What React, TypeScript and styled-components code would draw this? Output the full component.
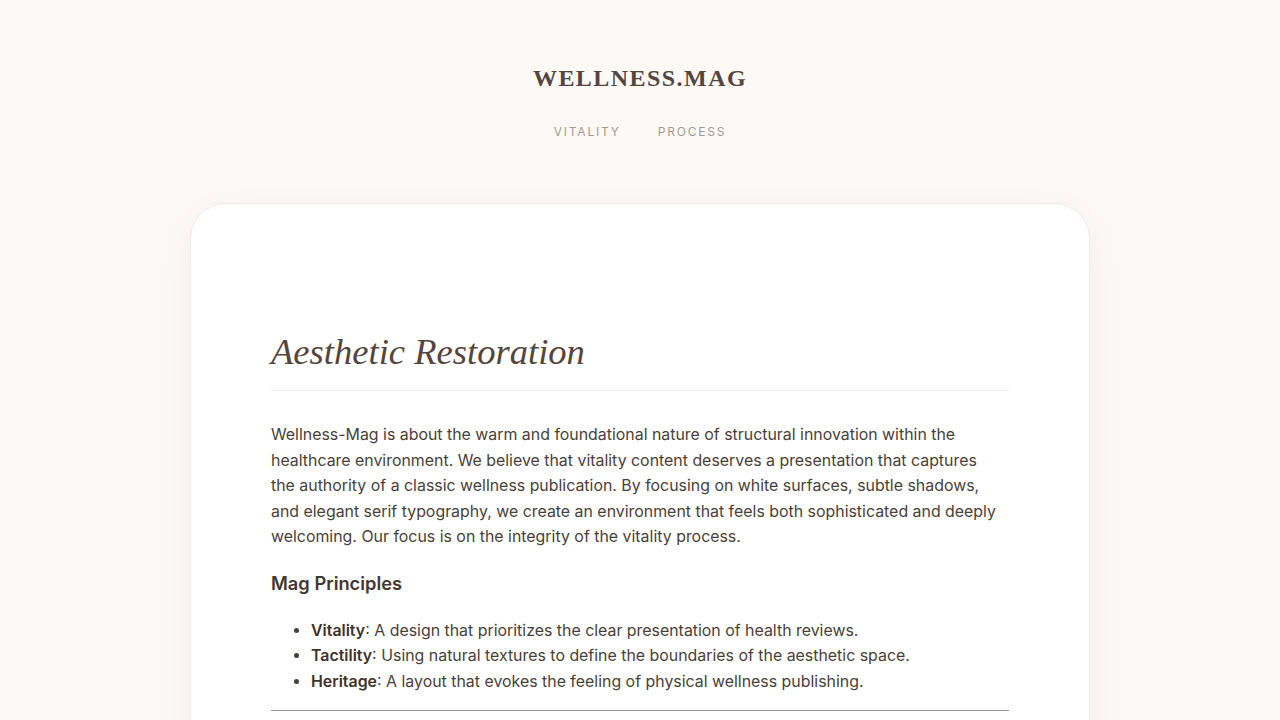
import React from "react";
import styled, { createGlobalStyle } from "styled-components";

const GlobalStyle = createGlobalStyle`
    html, body {
        margin: 0;
        padding: 0;
        background-color: #fdf9f7;
    }
    body {
        font-family: Inter, "Noto Sans", sans-serif;
        color: #4a3f39;
    }
`;

const Page = styled.div`
    min-height: 100vh;
    display: flex;
    flex-direction: column;
    align-items: center;
`;

const Header = styled.header`
    display: flex;
    flex-direction: column;
    align-items: center;
    padding-top: 62px;
    padding-bottom: 62px;
`;

const Logo = styled.div`
    font-family: "Liberation Serif", serif;
    font-weight: 700;
    font-size: 24px;
    letter-spacing: 1.45px;
    color: #54463d;
    line-height: 32px;
`;

const Nav = styled.nav`
    display: flex;
    gap: 37px;
    margin-top: 29px;
`;

const NavLink = styled.a`
    font-size: 12px;
    letter-spacing: 1.8px;
    color: #a39a93;
    text-decoration: none;
    line-height: 18px;
`;

const Card = styled.main`
    width: 738px;
    background-color: #fff;
    border: 1px solid #f1ece8;
    border-radius: 36px;
    padding: 126px 80px 80px;
    box-shadow: 0 10px 40px rgba(120, 90, 60, 0.07);
`;

const Title = styled.h1`
    margin: 0;
    padding-bottom: 16px;
    border-bottom: 1px solid #efebe8;
    font-family: "Liberation Serif", serif;
    font-style: italic;
    font-weight: 400;
    font-size: 36.6px;
    line-height: 44px;
    color: #55453b;
`;

const Paragraph = styled.p`
    max-width: 728px;
    margin: 31px 0 0;
    font-size: 15.9px;
    line-height: 25.5px;
`;

const SubTitle = styled.h2`
    margin: 19px 0 0;
    font-size: 18.3px;
    font-weight: 600;
    line-height: 28px;
    color: #45372f;
`;

const List = styled.ul`
    margin: 21px 0 0;
    padding-left: 40px;
    font-size: 15.9px;
    line-height: 25.5px;

    & strong {
        font-weight: 600;
        color: #3f322b;
    }
`;

const Rule = styled.hr`
    margin: 16px 0 0;
    border: none;
    border-top: 1px solid #9a9592;
`;

const principles = [
    { name: "Vitality", text: "A design that prioritizes the clear presentation of health reviews." },
    { name: "Tactility", text: "Using natural textures to define the boundaries of the aesthetic space." },
    { name: "Heritage", text: "A layout that evokes the feeling of physical wellness publishing." },
];

export default function App() {
    return (
        <Page>
            <GlobalStyle />
            <Header>
                <Logo>WELLNESS.MAG</Logo>
                <Nav>
                    <NavLink href="#">VITALITY</NavLink>
                    <NavLink href="#">PROCESS</NavLink>
                </Nav>
            </Header>
            <Card>
                <Title>Aesthetic Restoration</Title>
                <Paragraph>
                    Wellness-Mag is about the warm and foundational nature of structural innovation within the
                    healthcare environment. We believe that vitality content deserves a presentation that captures
                    the authority of a classic wellness publication. By focusing on white surfaces, subtle shadows,
                    and elegant serif typography, we create an environment that feels both sophisticated and deeply
                    welcoming. Our focus is on the integrity of the vitality process.
                </Paragraph>
                <SubTitle>Mag Principles</SubTitle>
                <List>
                    {principles.map((p) => (
                        <li key={p.name}>
                            <strong>{p.name}</strong>: {p.text}
                        </li>
                    ))}
                </List>
                <Rule />
            </Card>
        </Page>
    );
}
